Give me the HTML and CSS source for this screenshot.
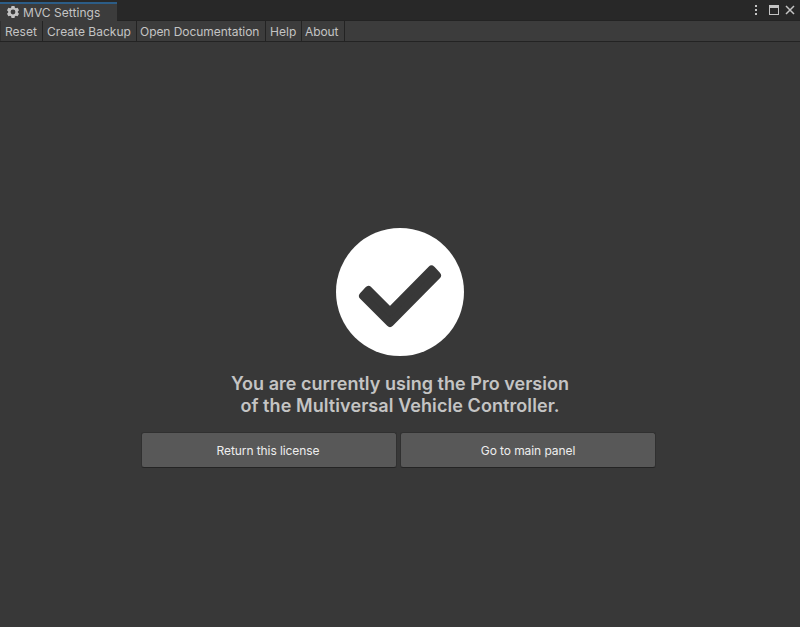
FILE: index.html
```html
<!DOCTYPE html>
<html lang="en"><head><meta charset="utf-8"><title>MVC Settings</title><link rel="stylesheet" href="styles.css"></head>
<body>
<header class="tabs">
<div class="tab"><svg class="gear" viewBox="0 0 14 14"><path fill="#c4c4c4" fill-rule="evenodd" d="M5.500 1h3l.4 1.700 1 .6 1.700-.5 1.400 2.500-1.200 1.200v1l1.200 1.200-1.400 2.500-1.700-.5-1 .6-.4 1.700h-3l-.4-1.700-1-.6-1.700.5L1 8.700l1.200-1.200v-1L1 5.300l1.400-2.500 1.700.5 1-.6zM7 4.600a2.400 2.400 0 1 0 0 4.800a2.400 2.400 0 1 0 0-4.800z"/></svg><span>MVC Settings</span></div>
<svg class="controls" viewBox="0 0 48 20"><g fill="#c4c4c4"><path d="M3 5h2v2H3zM3 9h2v2H3zM3 13h2v2H3z"/><path fill-rule="evenodd" d="M17 5h10v10H17zM18 8v6h8V8z"/></g><path d="M34 6l8 8M42 6l-8 8" stroke="#c4c4c4" stroke-width="1.500"/></svg>
</header>
<nav class="toolbar"><span class="reset">Reset</span><span class="backup">Create Backup</span><span class="docs">Open Documentation</span><span class="help">Help</span><span class="about">About</span></nav>
<main>
<svg class="check" viewBox="0 0 128 128"><circle cx="64" cy="64" r="64" fill="#fff"/><path d="M27 68l5.500-6L54 83.500l41.500-42 5.500 6L54 95z" fill="#383838" stroke="#383838" stroke-width="8" stroke-linejoin="round"/></svg>
<h1>You are currently using the Pro version<br><span class="second-line">of the Multiversal Vehicle Controller.</span></h1>
<div class="actions"><button>Return this license</button><button>Go to main panel</button></div>
</main>
</body></html>
```
FILE: styles.css
```css
body{margin:0;height:627px;background:#383838;color:#c4c4c4;font:12px Inter,sans-serif;display:flex;flex-direction:column;overflow:hidden}
.tabs{height:20px;background:#282828;display:flex;justify-content:space-between}
.tab{width:117px;height:19px;margin-top:2px;box-sizing:border-box;border-top:2px solid #2c5d87;background:#3c3c3c;display:flex;padding-left:6px;line-height:18px;gap:3px;letter-spacing:.04px;z-index:1}
.gear{width:14px;height:14px;margin-top:1px}
.controls{width:48px;height:20px}
.toolbar{height:20px;background:#3c3c3c;border-top:1px solid #232323;border-bottom:1px solid #232323;display:flex;line-height:22px;letter-spacing:.03px}
.toolbar span{box-sizing:border-box;padding-left:4px;border-right:1px solid #232323;white-space:nowrap}
.toolbar .reset{width:43px;border-left:1px solid #303030}
.backup{width:94px}
.toolbar .docs{width:129px;padding-left:3px;letter-spacing:-.05px}
.help{width:36px}
.toolbar .about{width:43px;padding-left:3px;letter-spacing:-.1px}
main{flex:1;display:flex;flex-direction:column;align-items:center;padding-top:186px}
.check{width:128px;height:128px}
h1{margin:17px 0 15px;font-size:18px;line-height:22px;font-weight:600;text-align:center;letter-spacing:.03px}
.second-line{letter-spacing:.08px}
.actions{display:flex;gap:3px;margin-right:3px}
button{width:256px;height:36px;padding:0 2px 0 0;background:#585858;border:1px solid #303030;border-bottom-color:#242424;border-radius:3px;color:#eee;font:12px Inter,sans-serif;letter-spacing:-.08px}
button + button{padding:0}
```
